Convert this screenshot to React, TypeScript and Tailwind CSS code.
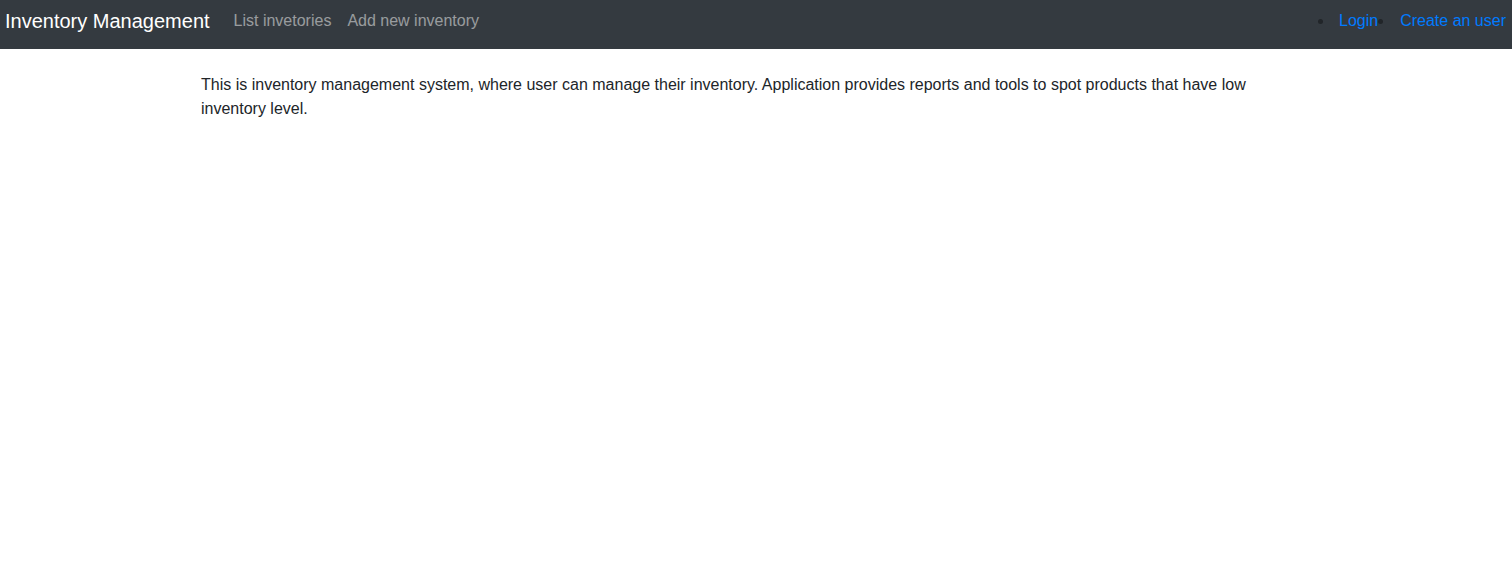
const App = () => {
  const links = ['List invetories', 'Add new inventory'];
  const userLinks = ['Login', 'Create an user'];

  return (
    <div className="min-h-screen bg-white font-['Liberation_Sans',Arial,sans-serif] text-[#212529]">
      {/* Navbar */}
      <nav className="h-[49px] bg-[#343a40] flex items-start">
        <a href="#" className="pl-[5px] pt-[6px] text-xl leading-[30px] text-white">
          Inventory Management
        </a>
        <ul className="flex pt-[9px] ml-6 gap-4">
          {links.map((link) => (
            <li key={link}>
              <a href="#" className="text-base leading-6 text-white/50">
                {link}
              </a>
            </li>
          ))}
        </ul>
        <ul className="ml-auto flex pt-[9px] pr-[6px]">
          {userLinks.map((link, index) => (
            <li key={link} className="flex items-center">
              <span className={`w-[5px] h-[5px] rounded-full bg-[#212529] ${index === 0 ? 'mr-4' : 'mr-[17px]'}`} />
              <a href="#" className="text-base leading-6 text-[#007bff]">
                {link}
              </a>
            </li>
          ))}
        </ul>
      </nav>

      {/* Content */}
      <div className="max-w-[1140px] mx-auto px-[15px] mt-6">
        <p className="text-base leading-6">
          This is inventory management system, where user can manage their inventory. Application provides reports and tools to spot products that have low inventory level.
        </p>
      </div>
    </div>
  );
};

export default App;
